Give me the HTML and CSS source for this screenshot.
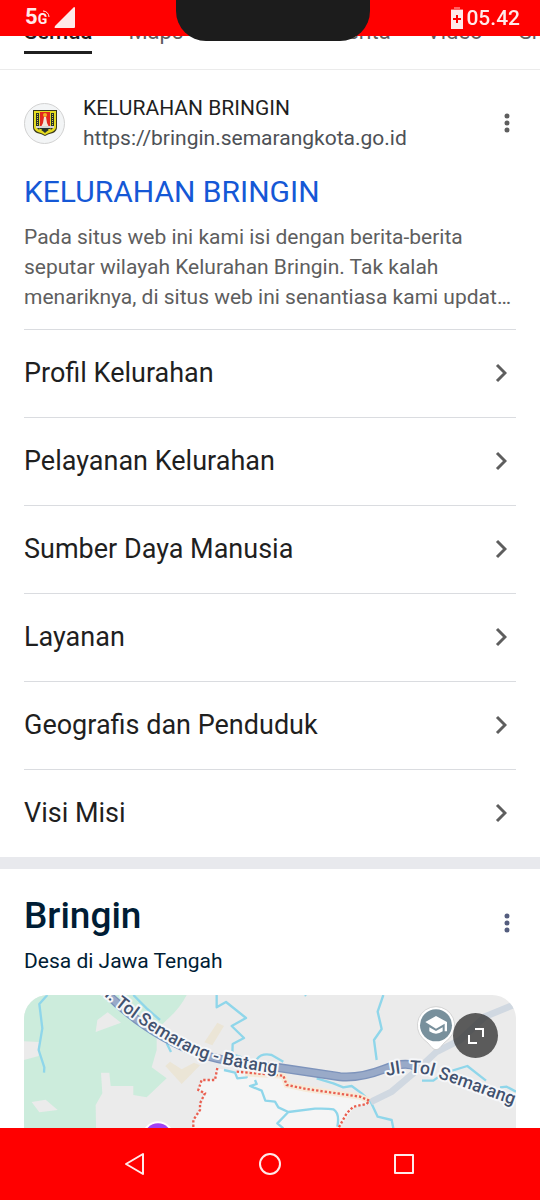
FILE: index.html
```
<!DOCTYPE html>
<html lang="id">
<head>
  <meta charset="UTF-8">
  <title>Kelurahan Bringin - Penelusuran</title>
  <meta name="viewport" content="width=device-width, initial-scale=1.0">
  <link rel="stylesheet" href="styles.css">
</head>
<body>
  <header class="status-bar">
    <div class="status-left">
      <span class="network">5<small>G</small></span>
      <svg class="waves" viewBox="0 0 8 8"><path d="M1 1a6 6 0 0 1 6 6M1 4a3 3 0 0 1 3 3"/></svg>
      <svg class="signal" viewBox="0 0 22 22"><path d="M20 0q1 0 1 1v19q0 1-1 1H1q-1 0 0-2z"/></svg>
    </div>
    <div class="notch"></div>
    <div class="status-right">
      <svg class="battery" viewBox="0 0 12 22"><path opacity=".4" d="M3 0h6v2h3v1H0V2h3z"/><path d="M0 3h12v19H0z"/><path class="plus" d="M6 8v8M2 12h8"/></svg>
      <span class="clock">05.42</span>
    </div>
  </header>

  <nav class="tabs">
    <a class="active" href="#">Semua</a>
    <a href="#">Maps</a>
    <a href="#">Gambar</a>
    <a href="#">Berita</a>
    <a href="#">Video</a>
    <a href="#">Shopping</a>
  </nav>

  <main>
    <section class="result">
      <div class="source">
        <span class="favicon">
          <svg viewBox="0 0 26 28">
            <path fill="#3a3a1c" d="M1 1h24v17q0 4-4 6-5 1-8 3-3-2-8-3-4-2-4-6z"/>
            <path fill="#e6dc22" d="M2 2h22v16q0 3-4 5-4 1-7 3-3-2-7-3-4-2-4-5z"/>
            <path fill="#27332c" d="M4 4h3v13H4zM19 4h3v13h-3z"/>
            <path stroke="#d8d04a" stroke-dasharray="1 1" d="M5.500 5v11M20.500 5v11"/>
            <path fill="#e3281d" d="M8 3h10v15H8z"/>
            <path fill="#f2e6da" d="M12 8h2l1 6 2 4H9l2-4z"/>
            <circle cx="13" cy="6" r="2" fill="#f0b428"/>
            <path fill="#d5d5d5" d="M4 17h18v2H4z"/>
            <path fill="#27332c" d="M5 19h16q-1 2-4 2-2 1-4 3-2-2-4-3-3 0-4-2z"/>
            <path stroke="#e6dc22" fill="none" d="M7 20l3 1M19 20l-3 1"/>
          </svg>
        </span>
        <div class="source-text">
          <div class="site">KELURAHAN BRINGIN</div>
          <div class="url">https://bringin.semarangkota.go.id</div>
        </div>
        <button class="more" aria-label="Opsi lainnya"><svg viewBox="0 0 6 20"><circle cx="3" cy="3" r="2.500"/><circle cx="3" cy="10" r="2.500"/><circle cx="3" cy="17" r="2.500"/></svg></button>
      </div>
      <h3><a href="#">KELURAHAN BRINGIN</a></h3>
      <p class="snippet">Pada situs web ini kami isi dengan berita-berita seputar wilayah Kelurahan Bringin. Tak kalah menariknya, di situs web ini senantiasa kami update informasi terbaru</p>
      <div class="sitelinks">
        <a href="#">Profil Kelurahan<svg viewBox="0 0 12 20"><path d="M2 2l8 8-8 8"/></svg></a>
        <a href="#">Pelayanan Kelurahan<svg viewBox="0 0 12 20"><path d="M2 2l8 8-8 8"/></svg></a>
        <a href="#">Sumber Daya Manusia<svg viewBox="0 0 12 20"><path d="M2 2l8 8-8 8"/></svg></a>
        <a href="#">Layanan<svg viewBox="0 0 12 20"><path d="M2 2l8 8-8 8"/></svg></a>
        <a href="#">Geografis dan Penduduk<svg viewBox="0 0 12 20"><path d="M2 2l8 8-8 8"/></svg></a>
        <a href="#">Visi Misi<svg viewBox="0 0 12 20"><path d="M2 2l8 8-8 8"/></svg></a>
      </div>
    </section>

    <section class="place">
      <div class="place-head">
        <h2>Bringin</h2>
        <button class="more" aria-label="Opsi lainnya"><svg viewBox="0 0 6 20"><circle cx="3" cy="3" r="2.500"/><circle cx="3" cy="10" r="2.500"/><circle cx="3" cy="17" r="2.500"/></svg></button>
      </div>
      <p class="place-type">Desa di Jawa Tengah</p>
      <div class="map">
        <svg class="map-art" viewBox="72 45 1476 615" preserveAspectRatio="xMidYMin slice">
          <path fill="#ebebeb" d="M72 45h1476v615H72z"/>
          <!-- parks -->
          <path fill="#ccecdc" d="M72 45H560Q540 85 500 120L470 150V210L455 262L500 295L440 352L400 345V318H332L328 278H303L307 340L287 375L292 660H72z"/>
          <path fill="#ebebeb" d="M323 97L363 128L287 156L292 120zM72 184L118 186L116 228L72 240zM95 366L137 359L173 390L118 397z"/>
          <!-- buildings -->
          <path fill="#ebe5d6" d="M652 128L672 138L637 196L613 187zM510 245L545 268L582 248L600 256L545 312L496 258z"/>
          <!-- village area -->
          <path fill="#f5f5f5" d="M652 265L645 300H605L595 330L615 340L600 390L580 420V660H960L1020 440L1060 385L1112 366L1080 350L860 315L850 285L700 275z"/>
          <g class="river">
            <path d="M142 45L118 72L127 145L116 210L133 262L132 278M400 45L440 85L480 120M500 190L513 216M650 45V82L678 66L738 114L695 138L732 174L698 192L697 222L725 232M770 238Q785 218 815 225L850 245M672 270L705 278L712 295L740 292V280M765 300L770 312L750 318L785 332L796 362L825 365L835 382L865 396L832 430L850 445M865 396L945 386Q985 385 1000 388Q1020 400 1012 440M915 45L918 48M1150 45L1133 95L1145 147L1122 180L1130 240M950 295L1000 310L1030 322L1055 318L1085 340L1112 365L1133 410L1175 420L1180 445M1266 302H1300L1330 280L1402 258L1458 302M1500 322L1520 320L1548 335"/>
          </g>
          <path class="road" d="M1548 72L1455 110L1380 180L1310 215L1240 280L1175 335L1112 366"/>
          <path class="border-glow" d="M735 280L850 287L860 315L920 327L1080 350L1108 362"/>
          <path class="border-line" d="M652 264L645 300H605L595 330L615 340L600 370L600 390L580 420V445M710 275L850 287L860 315L920 327L1080 350L1108 362L1100 372L1060 380L1040 400L1015 445"/>
          <path class="tollway-edge" d="M310 30Q440 165 610 225Q720 255 830 262L1020 290Q1080 295 1150 268T1250 262"/>
          <path class="tollway" d="M310 30Q440 165 610 225Q720 255 830 262L1020 290Q1080 295 1150 268T1250 262"/>
          <path id="west" fill="none" d="M290 28Q430 154 590 228Q690 266 880 286"/>
          <path id="east" fill="none" d="M1160 288Q1240 268 1310 292L1560 382"/>
          <text class="road-label"><textPath href="#west">Jl. Tol Semarang - Batang</textPath></text>
          <text class="road-label"><textPath href="#east">Jl. Tol Semarang</textPath></text>
          <circle cx="474" cy="472" r="48" fill="#fff"/>
          <circle cx="474" cy="472" r="42" fill="#a142f4"/>
          <!-- school pin -->
          <path class="pin" d="M1308 80a56 56 0 0 1 40 95q-18 14-28 28q-12 12-24 0q-10-14-28-28a56 56 0 0 1 40-95z"/>
          <circle cx="1308" cy="136" r="48" fill="#78909c"/>
          <path fill="#fff" d="M1308 108L1341 126V154H1334V131L1308 146L1276 126zM1288 142L1308 153L1328 142V154Q1308 168 1288 154z"/>
        </svg>
        <button class="expand" aria-label="Perluas peta"><svg viewBox="0 0 16 16"><path d="M7 1h8v8M1 7v8h8"/></svg></button>
      </div>
    </section>
  </main>

  <footer class="nav-bar">
    <button aria-label="Kembali"><svg viewBox="0 0 24 24"><path d="M19 2v20L2 12z"/></svg></button>
    <button aria-label="Beranda"><svg viewBox="0 0 24 24"><circle cx="12" cy="12" r="10"/></svg></button>
    <button aria-label="Terbaru"><svg viewBox="0 0 24 24"><path d="M3 3h18v18H3z"/></svg></button>
  </footer>
</body>
</html>
```

FILE: styles.css
```
* { box-sizing:border-box; }
body {
  margin:0; min-height:100vh; display:flex; flex-direction:column;
  font-family:Roboto,Arial,sans-serif; background:#fff; color:#1f1f1f;
}
a { color:inherit; text-decoration:none; }
button { background:none; border:none; padding:0; cursor:pointer; }
svg { display:block; }

/* status bar */
.status-bar {
  position:fixed; top:0; left:0; right:0; z-index:10; height:36px;
  display:flex; justify-content:space-between; background:#f00; color:#ffeaea;
}
.status-left, .status-right { flex:1; display:flex; align-items:center; }
.status-left { padding-left:25px; }
.status-right { justify-content:flex-end; padding-right:20px; gap:3px; }
.network { font-size:22px; font-weight:700; line-height:36px; }
.network small { font-size:14px; }
.waves { width:8px; height:8px; margin:-8px 0 0 -5px; fill:none; stroke:#ffeaea; }
.signal { width:22px; height:22px; margin-left:4px; fill:#ffeaea; }
.battery { width:12px; height:22px; fill:#ffeaea; }
.battery .plus { stroke:#f00; stroke-width:2; }
.clock { font-size:21px; font-weight:500; line-height:38px; }
.notch { width:194px; height:41px; background:#1c1c1c; border-radius:0 0 30px 30px; }

/* search tabs */
.tabs {
  display:flex; gap:36px; height:70px; padding:16px 24px 0; overflow:hidden;
  border-bottom:1px solid #ebebeb; font-size:22px; line-height:32px; color:#5e5e5e;
}
.tabs a { height:38px; }
.tabs .active { color:#1f1f1f; font-weight:500; border-bottom:3px solid #1f1f1f; }

main { flex:1; display:flex; flex-direction:column; }

/* search result */
.result { padding:23px 24px 0; }
.source { display:flex; align-items:center; gap:18px; }
.favicon {
  width:41px; height:41px; display:flex; align-items:center; justify-content:center;
  background:#f3f5f6; border:1px solid #d2d2d2; border-radius:50%;
}
.favicon svg { width:26px; height:28px; }
.source-text { flex:1; line-height:30px; }
.site { font-size:21px; }
.url { font-size:21px; color:#4d5156; }
.more { width:18px; height:32px; display:flex; align-items:center; justify-content:center; fill:#5e5e5e; }
.more svg { width:6px; height:20px; }
.result h3 { margin:19px 0 10px; font-size:30px; font-weight:400; line-height:40px; color:#1558d6; }
.snippet {
  margin:0 0 17px; font-size:21px; line-height:30px; color:#5e5e5e;
  display:-webkit-box; -webkit-box-orient:vertical; -webkit-line-clamp:3; overflow:hidden;
}
.sitelinks a {
  display:flex; align-items:center; justify-content:space-between; height:88px; padding:0 9px 2px 0;
  border-top:1px solid #dadce0; font-size:27px; line-height:36px;
}
.sitelinks svg { width:12px; height:20px; fill:none; stroke:#5e5e5e; stroke-width:3; }

/* place panel */
.place {
  flex:1; display:flex; flex-direction:column; padding:24px 24px 0;
  border-top:12px solid #e8e9ed; color:#001d35;
}
.place-head { display:flex; align-items:flex-end; justify-content:space-between; }
.place h2 { margin:0; font-size:37px; font-weight:500; line-height:46px; }
.place .more { fill:#545d7e; }
.place-type { margin:7px 0 19px; font-size:21px; line-height:30px; }
.map { position:relative; flex:1; min-height:200px; border-radius:24px 24px 0 0; overflow:hidden; }
.map-art { position:absolute; width:100%; height:100%; }
.river { fill:none; stroke:#8fd6ea; stroke-width:7; stroke-linejoin:round; }
.road { fill:none; stroke:#d0d8e1; stroke-width:20; }
.tollway-edge { fill:none; stroke:#7d93bb; stroke-width:27; }
.tollway { fill:none; stroke:#99aac8; stroke-width:19; }
.border-glow { fill:none; stroke:#f6ead9; stroke-width:18; }
.border-line { fill:none; stroke:#ea5f50; stroke-width:7; stroke-dasharray:7 6; }
.road-label {
  font-size:53px; font-weight:500; fill:#42526f;
  stroke:#f6f7f9; stroke-width:12; stroke-linejoin:round; paint-order:stroke;
}
.pin { fill:#fff; stroke:#c4c4c4; stroke-width:2; }
.expand {
  position:absolute; top:18px; right:18px; width:45px; height:45px; border-radius:50%;
  display:flex; align-items:center; justify-content:center; background:rgba(50,50,50,0.78);
}
.expand svg { width:16px; height:16px; fill:none; stroke:#fff; stroke-width:2; }

/* android navigation */
.nav-bar {
  position:fixed; bottom:0; left:0; right:0; z-index:10; height:72px;
  display:flex; align-items:center; justify-content:center; gap:110px; background:#f00;
}
.nav-bar svg { width:24px; height:24px; fill:none; stroke:#ffeaea; stroke-width:2; stroke-linejoin:round; }
```
